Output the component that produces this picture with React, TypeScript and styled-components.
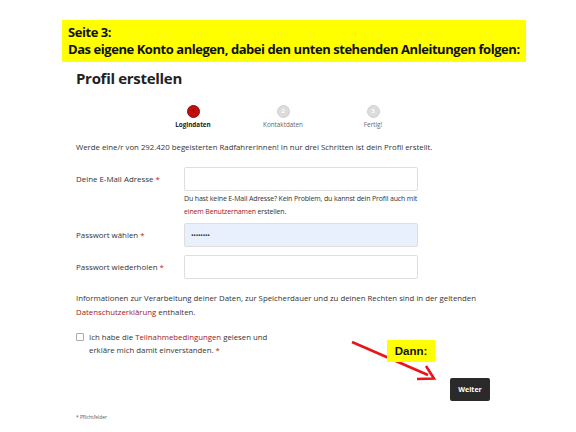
import styled, { createGlobalStyle } from "styled-components";

const GlobalStyle = createGlobalStyle`
  html, body {
    margin: 0;
    padding: 0;
    background: #ffffff;
  }
  * {
    box-sizing: border-box;
  }
`;

const Page = styled.div`
  position: relative;
  width: 576px;
  height: 432px;
  overflow: hidden;
  padding: 20px 0 0 62px;
  font-family: "Open Sans", "Noto Sans", sans-serif;
  color: #333;
`;

const Banner = styled.div`
  width: 464px;
  height: 42px;
  background: #ffff00;
  padding: 4px 0 0 6px;
  font-family: "Open Sans", sans-serif;
  font-weight: 700;
  font-size: 13px;
  letter-spacing: -0.45px;
  line-height: 17px;
  color: #111;
`;

const Content = styled.div`
  width: 414px;
  margin-left: 14px;
`;

const Title = styled.h1`
  margin: 5px 0 0;
  font-size: 15px;
  letter-spacing: -0.3px;
  line-height: 22px;
  font-weight: 700;
  color: #222;
`;

const Stepper = styled.div`
  display: flex;
  justify-content: center;
  margin-top: 16px;
`;

const Step = styled.div`
  width: 90px;
  display: flex;
  flex-direction: column;
  align-items: center;
  gap: 3px;
`;

const StepDot = styled.div<{ $active?: boolean }>`
  width: 13px;
  height: 13px;
  border-radius: 50%;
  background: ${({ $active }) => ($active ? "#c40d0d" : "#dcdcdc")};
  border: 1px solid ${({ $active }) => ($active ? "#8e0a0a" : "#d0d0d0")};
  color: ${({ $active }) => ($active ? "#8e0a0a" : "#ffffff")};
  font-size: 6px;
  font-weight: 700;
  line-height: 11px;
  text-align: center;
`;

const StepLabel = styled.div<{ $active?: boolean }>`
  font-size: 6.3px;
  line-height: 8px;
  font-weight: ${({ $active }) => ($active ? 700 : 400)};
  color: ${({ $active }) => ($active ? "#222" : "#666")};
`;

const Intro = styled.p`
  margin: 13px 0 0;
  font-size: 7.8px;
  line-height: 11px;
  color: #333;
`;

const Row = styled.div<{ $top: number }>`
  display: grid;
  grid-template-columns: 108px 234px;
  align-items: center;
  margin-top: ${({ $top }) => $top}px;
`;

const Label = styled.label`
  font-size: 7.9px;
  line-height: 11px;
  color: #333;
`;

const Star = styled.span`
  color: #c21a1a;
`;

const Input = styled.div<{ $filled?: boolean }>`
  height: 24px;
  border: 1px solid #dedede;
  border-radius: 2px;
  background: ${({ $filled }) => ($filled ? "#e8f0fe" : "#ffffff")};
  padding-left: 6px;
  display: flex;
  align-items: center;
  font-size: 7px;
  letter-spacing: -0.3px;
  color: #333;
`;

const Help = styled.p`
  margin: 1px 0 0 108px;
  width: 240px;
  font-size: 7px;
  line-height: 13px;
  color: #333;
  letter-spacing: -0.15px;
`;

const Link = styled.span`
  color: #a3141f;
`;

const Info = styled.p`
  margin: 12px 0 0;
  font-size: 7.8px;
  line-height: 14px;
  color: #333;
`;

const Consent = styled.div`
  display: flex;
  align-items: flex-start;
  gap: 5px;
  margin-top: 12px;
`;

const Checkbox = styled.span`
  flex: none;
  width: 8px;
  height: 8px;
  margin-top: 2px;
  border: 1px solid #aaa;
  border-radius: 1px;
  background: #fff;
`;

const ConsentText = styled.p`
  margin: 0;
  width: 186px;
  font-size: 7.8px;
  line-height: 13px;
  color: #333;
`;

const Actions = styled.div`
  display: flex;
  justify-content: flex-end;
  margin-top: 21px;
`;

const NextButton = styled.button`
  width: 40px;
  height: 23px;
  border: none;
  border-radius: 2px;
  background: #2a2a2a;
  color: #fff;
  font-family: inherit;
  font-size: 7px;
  font-weight: 700;
  padding: 0;
`;

const Footnote = styled.p`
  margin: 13px 0 0;
  font-size: 4.8px;
  line-height: 6px;
  color: #555;
`;

const Arrow = styled.svg`
  position: absolute;
  left: 0;
  top: 0;
  pointer-events: none;
`;

const Callout = styled.div`
  position: absolute;
  left: 387px;
  top: 340px;
  width: 48px;
  height: 22px;
  background: #ffff00;
  font-family: "Liberation Sans", Arial, sans-serif;
  font-weight: 700;
  font-size: 11.5px;
  line-height: 22px;
  text-align: center;
  color: #111;
`;

const steps = [
  { n: "1", label: "Logindaten", active: true },
  { n: "2", label: "Kontaktdaten" },
  { n: "3", label: "Fertig!" },
];

export default function App() {
  return (
    <>
      <GlobalStyle />
      <Page>
        <Banner>
          Seite 3:
          <br />
          Das eigene Konto anlegen, dabei den unten stehenden Anleitungen folgen:
        </Banner>
        <Content>
          <Title>Profil erstellen</Title>
          <Stepper>
            {steps.map((s) => (
              <Step key={s.n}>
                <StepDot $active={s.active}>{s.n}</StepDot>
                <StepLabel $active={s.active}>{s.label}</StepLabel>
              </Step>
            ))}
          </Stepper>
          <Intro>
            Werde eine/r von 292.420 begeisterten RadfahrerInnen! In nur drei
            Schritten ist dein Profil erstellt.
          </Intro>
          <Row $top={14}>
            <Label>
              Deine E-Mail Adresse <Star>*</Star>
            </Label>
            <Input />
          </Row>
          <Help>
            Du hast keine E-Mail Adresse? Kein Problem, du kannst dein Profil
            auch mit <Link>einem Benutzernamen</Link> erstellen.
          </Help>
          <Row $top={5}>
            <Label>
              Passwort wählen <Star>*</Star>
            </Label>
            <Input $filled>••••••••</Input>
          </Row>
          <Row $top={8}>
            <Label>
              Passwort wiederholen <Star>*</Star>
            </Label>
            <Input />
          </Row>
          <Info>
            Informationen zur Verarbeitung deiner Daten, zur Speicherdauer und
            zu deinen Rechten sind in der geltenden{" "}
            <Link>Datenschutzerklärung</Link> enthalten.
          </Info>
          <Consent>
            <Checkbox />
            <ConsentText>
              Ich habe die <Link>Teilnahmebedingungen</Link> gelesen und
              erkläre mich damit einverstanden. <Star>*</Star>
            </ConsentText>
          </Consent>
          <Actions>
            <NextButton>Weiter</NextButton>
          </Actions>
          <Footnote>* Pflichtfelder</Footnote>
        </Content>
        <Arrow width="576" height="432" viewBox="0 0 576 432">
          <line x1="352" y1="342" x2="428" y2="375" stroke="#e8161b" strokeWidth="2.6" />
          <polyline points="417,379 434,378.5 426,366" fill="none" stroke="#e8161b" strokeWidth="2.6" />
        </Arrow>
        <Callout>Dann:</Callout>
      </Page>
    </>
  );
}
